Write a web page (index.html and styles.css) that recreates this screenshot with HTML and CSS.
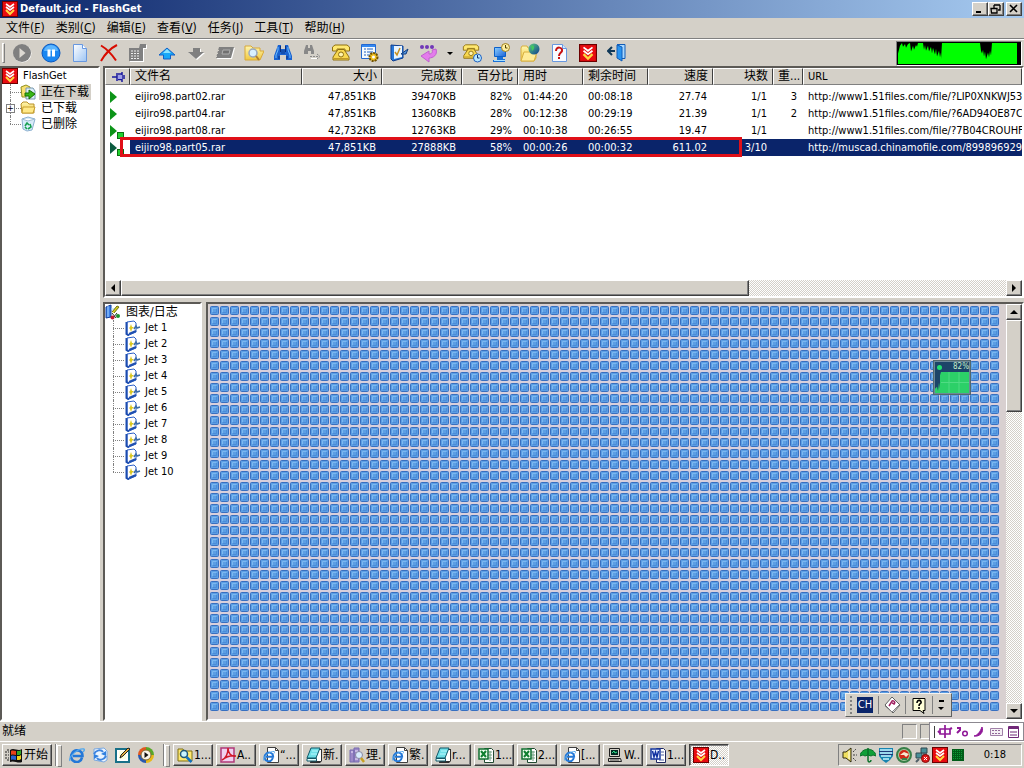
FILE: index.html
```html
<!DOCTYPE html>
<html lang="zh-CN">
<head>
<meta charset="utf-8">
<title>Default.jcd - FlashGet</title>
<link rel="stylesheet" href="styles.css">
</head>
<body>
<svg class="defs" aria-hidden="true">
  <defs>
    <linearGradient id="gBlue" x1="0" y1="0" x2="1" y2="1"><stop offset="0" stop-color="#8ed0ff"/><stop offset="1" stop-color="#1a62d8"/></linearGradient>
    <linearGradient id="gPage" x1="0" y1="0" x2="1" y2="1"><stop offset="0" stop-color="#fff"/><stop offset="1" stop-color="#9cc4f4"/></linearGradient>
    <linearGradient id="gFolder" x1="0" y1="0" x2="0" y2="1"><stop offset="0" stop-color="#fff6b0"/><stop offset="1" stop-color="#f0c840"/></linearGradient>
    <linearGradient id="gGlobe" x1="0" y1="0" x2="1" y2="1"><stop offset="0" stop-color="#60d080"/><stop offset="1" stop-color="#0c3c90"/></linearGradient>
    <pattern id="blocks" width="10" height="11" patternUnits="userSpaceOnUse">
      <rect width="10" height="11" fill="#d8d0dc"/>
      <rect x="0.500" y="0.500" width="8" height="8" rx="1" fill="#5c9fe4" stroke="#386fc0"/>
      <path d="M2.500 6.500v-4h4" fill="none" stroke="#7cb8f0"/>
      <path d="M6.500 3v3.500h-4" fill="none" stroke="#4c8cd8"/>
    </pattern>
  </defs>
  <symbol id="fg" viewBox="0 0 16 16"><path fill="#6c0000" d="M0 0h16v16H0z"/><path fill="#e80c10" d="M1 1h14v14H1z"/><path d="M4 3l4 3 4-3M4 6l4 3 4-3" fill="none" stroke="#fff" stroke-width="1.600"/><path d="M4 9l4 4 4-4" fill="none" stroke="#ffd840" stroke-width="2"/></symbol>
  <symbol id="play" viewBox="0 0 20 20"><circle cx="10.500" cy="10.500" r="9" fill="#fff"/><circle cx="10" cy="10" r="9" fill="#808080"/><path d="M7.500 5v10l6-5z" fill="#ddd9d2"/></symbol>
  <symbol id="pause" viewBox="0 0 20 20"><circle cx="10" cy="10" r="9" fill="#1a86f0" stroke="#0a58c0"/><path d="M3 8a7 6 0 0114 0z" fill="#5cb6ff"/><path d="M6.500 6.500h3v7h-3zM11 6.500h3v7h-3z" fill="#fff"/></symbol>
  <symbol id="page" viewBox="0 0 20 20"><path d="M3.500 1.500h9l4 4v13h-13z" fill="url(#gPage)" stroke="#6898e0"/><path d="M12.500 1.500v4h4" fill="#fff" stroke="#6898e0"/></symbol>
  <symbol id="del" viewBox="0 0 20 20"><path d="M2 2.500c5 3 11 9 15 15M18 2C12 5 6 11 2 18" fill="none" stroke="#d80c00" stroke-width="2"/></symbol>
  <symbol id="props" viewBox="0 0 20 20"><path d="M2 6h10l1-4h6v4h-3v13H2z" fill="#fff"/><path d="M1 5h10l1-4h6v4h-3v13H1z" fill="#808080"/><path d="M3 8h9M3 10.500h9M3 13h9M3 15.500h9" stroke="#eee" stroke-dasharray="2 1"/></symbol>
  <symbol id="up" viewBox="0 0 20 20"><path d="M10 5l8 7h-4.500v4h-7v-4H2z" fill="#18a8f8" stroke="#1060c8"/><path d="M10 6l4 4H6z" fill="#8ce4ff"/></symbol>
  <symbol id="down" viewBox="0 0 20 20"><path d="M11 17l8-7h-4V6H8v4H3z" fill="#fff"/><path d="M10 16l8-7h-4V5H7v4H2z" fill="#808080"/></symbol>
  <symbol id="stack" viewBox="0 0 20 20"><path d="M5 5h15l-3 11H2z" fill="#fff"/><path d="M4 4h15l-3 11H1z" fill="#808080"/><path d="M8 7h7l-1 4H7z" stroke="#b0b0b0" fill="#707070"/><path d="M0 7.500h4M0 10.500h3M0 13.500h2" stroke="#d4d0c8"/></symbol>
  <symbol id="fsearch" viewBox="0 0 20 20"><path d="M1 3h6l2 2h7v3h4l-4 9H1z" fill="url(#gFolder)" stroke="#d8a838"/><circle cx="9" cy="10" r="4" fill="#d8f0ff" stroke="#98a8c0" stroke-width="1.500"/><path d="M12 13l3 4" stroke="#b08030" stroke-width="2"/></symbol>
  <symbol id="bino" viewBox="0 0 20 20"><path d="M5 2h3v4h4V2h3l4 11v4h-6v-5H7v5H1v-4z" fill="#1a62d0"/><path d="M5 4v3L3 12v3M15 4v3l2 5v3" stroke="#70c0ff" fill="none"/><path d="M7.500 3v6M12.500 3v6M6 13v3M14 13v3" stroke="#083080"/><path d="M8 7h4v4H8z" fill="#1450b0"/></symbol>
  <symbol id="binog" viewBox="0 0 20 20"><path d="M4 2h2v3h2V2h2l2 6v3H9V8H6v3H2V8z" fill="#888"/><path d="M8 13.500h9M15 11l3 2.500-3 2.500" stroke="#888" fill="none" stroke-dasharray="2 1"/><path d="M9 15.500h6" stroke="#fff"/></symbol>
  <symbol id="phone" viewBox="0 0 20 20"><path d="M1.500 4L4 2h12l2.500 2v4H14V6H6v2H1.500z" fill="#ffe870" stroke="#907010"/><path d="M7 6.500h6l5 7.500v3H2v-3z" fill="#f8d850" stroke="#907010"/><circle cx="10" cy="11.500" r="2.500" fill="#fff4b0" stroke="#907010"/><path d="M3 15.500h14" stroke="#c09828"/></symbol>
  <symbol id="opts" viewBox="0 0 20 20"><path d="M1.500 1.500h14v14h-14z" fill="#f4faff" stroke="#2468d0"/><path d="M2 2h13v2H2z" fill="#3488f0"/><path d="M4 6h2M7 6h6M4 9h2M7 9h6M4 12h2M7 12h4" stroke="#2060c0"/><circle cx="13.500" cy="14" r="4" fill="#f0c020" stroke="#705000" stroke-width="2" stroke-dasharray="2 1"/><circle cx="13.500" cy="14" r="1.500" fill="#fff"/></symbol>
  <symbol id="log" viewBox="0 0 20 20"><path d="M2 2l12 1v12l-10 3-2-2z" fill="#2878d8" stroke="#0c3c90"/><path d="M5 3h8v11l-8 2z" fill="#e8f4ff"/><path d="M6 9l2 3 3-7" stroke="#c89020" stroke-width="1.500" fill="none"/><path d="M12 11l7-5-2 5h-4z" fill="#5898e0" stroke="#103c80"/></symbol>
  <symbol id="purple" viewBox="0 0 20 20"><circle cx="4" cy="4" r="2" fill="#7038b8"/><circle cx="9" cy="4" r="2" fill="#7038b8"/><circle cx="14" cy="4" r="2" fill="#7038b8"/><path d="M14 7l4-1c2 6-3 9-7 9v4l-8-6 8-5v3c3 0 4-2 3-4z" fill="#e47cec" stroke="#c060d0"/></symbol>
  <symbol id="phonec" viewBox="0 0 20 20"><use href="#phone" width="18" height="18"/><circle cx="15.500" cy="15" r="4" fill="#b8e8ff" stroke="#2060c0"/><path d="M15.500 12v3h2" stroke="#103070" fill="none"/></symbol>
  <symbol id="pc" viewBox="0 0 20 20"><path d="M3.500 4.500h11v9h-11z" fill="url(#gBlue)" stroke="#0c60c8"/><path d="M6 14h6v2h2v3H2v-2h4z" fill="#1870d8"/><path d="M3 17.500h11" stroke="#a8e0ff"/><circle cx="14.500" cy="4.500" r="4" fill="#fff0a0" stroke="#a08020"/><path d="M14.500 2v3h2" stroke="#504000" fill="none"/></symbol>
  <symbol id="fglobe" viewBox="0 0 20 20"><path d="M1 5l1-2h5l1 2h8v10l-2 3H1z" fill="url(#gFolder)" stroke="#d8b040"/><path d="M4 9h13l-3 9H1z" fill="#ffec98" stroke="#d8b040"/><circle cx="14" cy="6" r="5.500" fill="url(#gGlobe)"/><path d="M11 3c4-2 4 3 1 5" fill="#40c860"/></symbol>
  <symbol id="help" viewBox="0 0 20 20"><path d="M3.500 1.500h10l4 4v13h-14z" fill="#f8fbff" stroke="#6898e0"/><path d="M13.500 1.500v4h4" fill="#d4e6fc" stroke="#6898e0"/><path d="M7 8c0-5 7-4 6 0-1 2-3 2-3 5M10 14v2" fill="none" stroke="#c81010" stroke-width="2"/></symbol>
  <symbol id="exit" viewBox="0 0 20 20"><path d="M10 1.500h8v14h-4V4z" fill="#a8d8ff" stroke="#105cb8"/><path d="M10 2l5 2v14l-5-3z" fill="#2894f0" stroke="#105cb8"/><path d="M1 8h7M5 4L1 8l4 4" stroke="#103858" stroke-width="2" fill="none"/></symbol>
  <symbol id="folder" viewBox="0 0 16 16"><path d="M1 4l2-2h4l2 2h5v9H2z" fill="url(#gFolder)" stroke="#b89028"/><path d="M3 7h12l-2 6H2z" fill="#ffe988" stroke="#c8a030"/></symbol>
  <symbol id="fdown" viewBox="0 0 16 16"><path d="M1 3l5-2 4 2v3l-2 7H2z" fill="#f8e070" stroke="#90901c"/><path d="M6 4h7l2 3v8H6z" fill="#dceefa" stroke="#7898b0"/><path d="M5 9h4V6l6 4-6 5v-3H5z" fill="#38b818" stroke="#187000"/></symbol>
  <symbol id="recycle" viewBox="0 0 16 16"><path d="M2 3l6-2 7 2-3 11-5 1-4-2z" fill="#d8ecfa" stroke="#8cb0d0"/><path d="M2 3l6 2 7-2" fill="#fff" stroke="#a0bcd4"/><path d="M5 10l2-3 2 2M10 8l1 3-3 2M5 11l2 2" stroke="#18a050" stroke-width="1.600" fill="none"/></symbol>
  <symbol id="jet" viewBox="0 0 16 16"><path d="M2 2l7-1 2 2v9l-7 3-2-1z" fill="#fff" stroke="#2c60c8"/><path d="M1.500 2v12l2.500 1.500" fill="none" stroke="#1c4cb0" stroke-width="2"/><path d="M4 14l7-3" stroke="#2050b0" stroke-width="2"/><path d="M6 4l1 3h2L7 9l-1 3-1-3-1-1 1-1z" fill="#dcc820"/><path d="M9 9l2-3 1 2 3-1" stroke="#3c6ca8" stroke-width="1.600" fill="none"/></symbol>
  <symbol id="chart" viewBox="0 0 16 16"><path d="M1 3l5-2v12l-5 1z" fill="#3c80e8" stroke="#103c98"/><path d="M3 2v11M6 5h4" stroke="#a8d8ff"/><path d="M7 8l5-6 2 1-5 6" fill="#d8d020" stroke="#707010"/><path d="M7 9l4 5M12 9l-4 5" stroke="#303030"/><circle cx="7.500" cy="13.500" r="2" fill="#c01830"/><circle cx="13" cy="12" r="2" fill="#18902c"/></symbol>
  <symbol id="pin" viewBox="0 0 14 12"><path d="M0 6h5M5 2v8M6 3h4M6 8.500h4M10 1v10M12 4v4" stroke="#1818a0" stroke-width="1.500" fill="none"/><path d="M6 4h4v4H6z" fill="#a0a0e8"/></symbol>
  <symbol id="ie" viewBox="0 0 16 16"><path d="M13 10.500A5.500 5.500 0 113.200 6.200 5.500 5.500 0 0113.500 9H4" fill="none" stroke="#2478d8" stroke-width="2.600"/><path d="M1 14C-1 10 9 1 15 2c1 1 0 2-1 3" fill="none" stroke="#50a8f0" stroke-width="1.300"/></symbol>
  <symbol id="iepage" viewBox="0 0 16 16"><path d="M4.500.500h8l3 3v12h-11z" fill="#fff" stroke="#404040"/><path d="M12.500.500v3h3" fill="none" stroke="#404040"/><use href="#ie" y="3" width="12" height="12"/></symbol>
  <symbol id="oe" viewBox="0 0 16 16"><path d="M2 2l10-1 3 3v9l-3 2-10-2z" fill="#eaf4ff" stroke="#7aa8e0"/><path d="M2 7c2-4 7-5 9-2M14 9c-2 4-7 5-9 2" fill="none" stroke="#3c84e0" stroke-width="2"/><path d="M9 7l5-3v5zM7 9l-5 3V7z" fill="#3080e0"/></symbol>
  <symbol id="desk" viewBox="0 0 16 16"><path d="M1 2h13v13H1z" fill="#fff" stroke="#187088" stroke-width="2"/><path d="M4 4h7v8H4z" fill="#ffffe0"/><path d="M5 11l1-3 7-7 2 1-7 7z" fill="#e8b040" stroke="#202020"/></symbol>
  <symbol id="wmp" viewBox="0 0 16 16"><path d="M8 0a8 8 0 018 8H8z" fill="#58a828"/><path d="M16 8a8 8 0 01-8 8V8z" fill="#e8b818"/><path d="M8 16a8 8 0 01-8-8h8z" fill="#2858b0"/><path d="M0 8a8 8 0 018-8v8z" fill="#e05820"/><circle cx="8" cy="8" r="5" fill="#f8f4e8" stroke="#806830"/><path d="M6.500 5v6l4-3z" fill="#101010"/></symbol>
  <symbol id="find" viewBox="0 0 16 16"><path d="M1 2h5l1 2h8v10H1z" fill="#ffe870" stroke="#807010"/><circle cx="7" cy="7" r="3.500" fill="#c8f4ff" stroke="#205878" stroke-width="1.500"/><path d="M9.500 10l5 5" stroke="#1070c0" stroke-width="2.500"/></symbol>
  <symbol id="acro" viewBox="0 0 16 16"><path d="M1 1h13v14H1z" fill="#f0d0f0" stroke="#b03878" stroke-width="1.500"/><path d="M2 13c4-2 6-7 6-12 0 5 3 9 8 8-5-1-10 1-14 4z" fill="none" stroke="#d01828" stroke-width="1.500"/></symbol>
  <symbol id="note" viewBox="0 0 16 16"><path d="M6 2h10v12l-2 2H4z" fill="#303030"/><path d="M11 3h4v11h-5z" fill="#fff"/><path d="M5 1h9l-4 10H1z" fill="#70e0e8" stroke="#105868"/><path d="M1 11.500h9.500v2.500H1z" fill="#e8ffff" stroke="#105868"/><path d="M6 4h6M5 7h6" stroke="#b8f8ff"/></symbol>
  <symbol id="books" viewBox="0 0 16 16"><path d="M1 3h4v12H1zM5 1h5v14H5z" fill="#9c88c8" stroke="#786cb0"/><path d="M2 5h2M6 4h3M6 12h3" stroke="#f0e8ff"/><circle cx="10" cy="8" r="3.500" fill="#d8ecff" stroke="#8888a0"/><path d="M12 11l3 4" stroke="#c8a020" stroke-width="2.500"/></symbol>
  <symbol id="xls" viewBox="0 0 16 16"><path d="M6.500 1.500h7l2 2v12h-9z" fill="#fff" stroke="#204830"/><path d="M9 5h5M9 8h5M9 11h5M12 4v10" stroke="#70a080"/><path d="M1 2h9v10H1z" fill="#f0fff0" stroke="#107030" stroke-width="1.500"/><path d="M3 4l5 6M8 4l-5 6" stroke="#108030" stroke-width="2"/></symbol>
  <symbol id="doc" viewBox="0 0 16 16"><path d="M6.500 1.500h7l2 2v12h-9z" fill="#fff" stroke="#202860"/><path d="M11 5h3M11 8h3M9 13h5" stroke="#5060a0"/><path d="M1 2h9v10H1z" fill="#e8f0ff" stroke="#1838a0" stroke-width="1.500"/><path d="M2.500 4l1.500 6 1.500-5L7 10l1.500-6" fill="none" stroke="#1030a0" stroke-width="1.500"/></symbol>
  <symbol id="term" viewBox="0 0 16 16"><path d="M2.500 1.500h10v8h-10z" fill="#d4d0c8" stroke="#202020"/><path d="M1.500 11.500h12l1 3h-13z" fill="#d4d0c8" stroke="#202020"/><path d="M4 3h7v5H4z" fill="#002820"/><path d="M5 6l2-2 1 2 2-1" stroke="#30e890" fill="none"/><path d="M3 13h9" stroke="#505050"/></symbol>
  <symbol id="win" viewBox="0 0 18 16"><path d="M0 5h4M0 8h4M0 11h4M2 3h3M2 13h3" stroke="#202020" stroke-dasharray="2 1"/><path d="M5 3c4-3 8 2 12-1v13c-4 2-8-2-12 0z" fill="#101010"/><path d="M6 4c2-1 3 0 5 0v4C9 8 8 7 6 8z" fill="#e84018"/><path d="M12 4c2 0 3 0 4-1v4c-1 1-2 1-4 1z" fill="#30a828"/><path d="M6 9c2-1 3 0 5 0v4c-2 0-3-1-5 0z" fill="#2860d0"/><path d="M12 9c2 0 3 0 4-1v4c-1 1-2 1-4 1z" fill="#f0d020"/></symbol>
  <symbol id="sound" viewBox="0 0 16 16"><path d="M1 5h3l5-4v14l-5-4H1z" fill="#f0e060" stroke="#302c10"/><path d="M7 4v8" stroke="#fff"/><path d="M11 5l3-3M11 8h4M11 11l3 3" stroke="#404040" stroke-dasharray="2 1"/></symbol>
  <symbol id="umb" viewBox="0 0 16 16"><path d="M0 9c1-9 15-9 16 0l-3-1-2 1-3-1-3 1-2-1z" fill="#10a038" stroke="#0a7028"/><path d="M8 1v12c0 3 3 2 3 0" fill="none" stroke="#087028" stroke-width="1.500"/></symbol>
  <symbol id="shield" viewBox="0 0 16 16"><path d="M1 1h14v8l-3 4-4 3-4-3-3-4z" fill="#1884b0"/><path d="M2 3h12M2 6h12M3 9h10M5 12h6" stroke="#c8f4ff" stroke-width="1.300"/><path d="M1 4.500h14M1 7.500h14" stroke="#203878"/></symbol>
  <symbol id="circ" viewBox="0 0 16 16"><circle cx="8" cy="8" r="7" fill="#a8c8a0" stroke="#388048" stroke-width="2"/><circle cx="8" cy="8" r="5" fill="#d02818"/><path d="M4 8l4-3 5 2-3 3-2-2z" fill="#f8e8d0"/><path d="M6 12h5" stroke="#388048" stroke-width="2"/></symbol>
  <symbol id="netx" viewBox="0 0 16 16"><path d="M7 1h6v5H7zM2 6h6v5H2z" fill="#489098" stroke="#304850"/><path d="M5 12l-3 3M9 7h4" stroke="#506068" stroke-width="2"/><circle cx="11.500" cy="11.500" r="4" fill="#e01818" stroke="#800c0c"/><path d="M10 10l3 3M13 10l-3 3" stroke="#fff"/></symbol>
  <symbol id="ggrid" viewBox="0 0 16 16"><path d="M2 2h12v12H2z" fill="#005c18"/><path d="M3 3.500h10M3 5.500h10M3 7.500h10M3 9.500h10M3 11.500h10" stroke="#109838" stroke-dasharray="1 1"/></symbol>
</svg>

<header class="titlebar">
  <svg class="i16"><use href="#fg"/></svg>
  <h1>Default.jcd - FlashGet</h1>
  <div class="winbtns">
    <button class="raised" aria-label="最小化"><svg viewBox="0 0 12 10"><path d="M2 8h5" stroke="#000" stroke-width="2"/></svg></button>
    <button class="raised" aria-label="还原"><svg viewBox="0 0 12 10"><path d="M4 1h6M4 1v3M10 1v5H8M1 4.500h6v4.500H1.500z" fill="none" stroke="#000" stroke-width="1.300"/></svg></button>
    <button class="raised close" aria-label="关闭"><svg viewBox="0 0 12 10"><path d="M2 1l7 7M9 1L2 8" stroke="#000" stroke-width="1.600"/></svg></button>
  </div>
</header>

<nav class="menubar">
  <button>文件(<u>F</u>)</button><button>类别(<u>C</u>)</button><button>编辑(<u>E</u>)</button><button>查看(<u>V</u>)</button><button>任务(<u>J</u>)</button><button>工具(<u>T</u>)</button><button>帮助(<u>H</u>)</button>
</nav>

<div class="toolbar">
  <span class="grip"></span>
  <button aria-label="开始"><svg><use href="#play"/></svg></button>
  <button aria-label="暂停"><svg><use href="#pause"/></svg></button>
  <button aria-label="新建"><svg><use href="#page"/></svg></button>
  <button aria-label="删除"><svg><use href="#del"/></svg></button>
  <button aria-label="属性"><svg><use href="#props"/></svg></button>
  <button aria-label="上移"><svg><use href="#up"/></svg></button>
  <button aria-label="下移"><svg><use href="#down"/></svg></button>
  <button aria-label="打开"><svg><use href="#stack"/></svg></button>
  <button aria-label="打开目录"><svg><use href="#fsearch"/></svg></button>
  <button aria-label="查找"><svg><use href="#bino"/></svg></button>
  <button aria-label="查找下一个"><svg><use href="#binog"/></svg></button>
  <button aria-label="拨号"><svg><use href="#phone"/></svg></button>
  <button aria-label="选项"><svg><use href="#opts"/></svg></button>
  <button aria-label="日志"><svg><use href="#log"/></svg></button>
  <button aria-label="速度"><svg><use href="#purple"/></svg></button>
  <button class="drop" aria-label="更多"><span class="tri down"></span></button>
  <button aria-label="计划拨号"><svg><use href="#phonec"/></svg></button>
  <button aria-label="完成后关机"><svg><use href="#pc"/></svg></button>
  <button aria-label="站点"><svg><use href="#fglobe"/></svg></button>
  <button aria-label="帮助"><svg><use href="#help"/></svg></button>
  <button class="home" aria-label="主页"><svg><use href="#fg"/></svg></button>
  <button aria-label="退出"><svg><use href="#exit"/></svg></button>
  <svg class="graph" viewBox="0 0 124 24" preserveAspectRatio="none">
    <path fill="#000" d="M0 0h124v24H0z"/>
    <path fill="#0f0" d="M1 23V12L3 4 5 1 6 5 8 2 9 6 11 2 13 1 14 10 16 4 17 8 19 3 20 5 21 1H26L27 8 28 3 29 9 31 4 32 10 34 5 35 12 36 6 38 13 39 7 40 15 42 9 43 16 44 11V18L45 1H83L84 9 85 12 86 8 87 15 88 10 89 18 91 11 92 16 93 9 94 14 95 1H120V23z"/>
  </svg>
</div>

<main class="workspace">
  <aside class="sunken tree">
    <ul>
      <li class="root"><svg class="i16"><use href="#fg"/></svg><span>FlashGet</span></li>
      <li class="kid"><svg class="i16"><use href="#fdown"/></svg><span class="cjk selected">正在下载</span></li>
      <li class="kid has"><button class="expander" aria-label="展开">+</button><svg class="i16"><use href="#folder"/></svg><span class="cjk">已下载</span></li>
      <li class="kid last"><svg class="i16"><use href="#recycle"/></svg><span class="cjk">已删除</span></li>
    </ul>
  </aside>

  <div class="right">
    <section class="sunken list">
      <div class="tablewrap">
        <table>
          <colgroup><col class="c-pin"><col class="c-name"><col class="c-size"><col class="c-size"><col class="c-pct"><col class="c-time"><col class="c-time"><col class="c-time"><col class="c-blk"><col class="c-try"><col></colgroup>
          <thead><tr><th><svg class="pin"><use href="#pin"/></svg></th><th>文件名</th><th class="r">大小</th><th class="r">完成数</th><th class="r">百分比</th><th>用时</th><th>剩余时间</th><th class="r">速度</th><th class="r">块数</th><th class="cut">重...</th><th class="lat">URL</th></tr></thead>
          <tbody>
            <tr><td class="st"><span class="go"></span></td><td>eijiro98.part02.rar</td><td class="r">47,851KB</td><td class="r">39470KB</td><td class="r">82%</td><td>01:44:20</td><td>00:08:18</td><td class="r">27.74</td><td class="r">1/1</td><td class="r">3</td><td>http://www1.51files.com/file/?LIP0XNKWJ53</td></tr>
            <tr><td class="st"><span class="go"></span></td><td>eijiro98.part04.rar</td><td class="r">47,851KB</td><td class="r">13608KB</td><td class="r">28%</td><td>00:12:38</td><td>00:29:19</td><td class="r">21.39</td><td class="r">1/1</td><td class="r">2</td><td>http://www1.51files.com/file/?6AD94OE87C0</td></tr>
            <tr><td class="st"><span class="go dot"></span></td><td>eijiro98.part08.rar</td><td class="r">42,732KB</td><td class="r">12763KB</td><td class="r">29%</td><td>00:10:38</td><td>00:26:55</td><td class="r">19.47</td><td class="r">1/1</td><td></td><td>http://www1.51files.com/file/?7B04CROUHF</td></tr>
            <tr class="sel"><td class="st"><span class="go dot dim"></span></td><td>eijiro98.part05.rar</td><td class="r">47,851KB</td><td class="r">27888KB</td><td class="r">58%</td><td>00:00:26</td><td>00:00:32</td><td class="r">611.02</td><td class="r">3/10</td><td></td><td>http://muscad.chinamofile.com/8998969293</td></tr>
          </tbody>
        </table>
        <div class="mark"></div>
      </div>
      <div class="hscroll">
        <button class="raised sb" aria-label="向左"><span class="tri left"></span></button>
        <div class="track"><div class="raised thumb"></div></div>
        <button class="raised sb" aria-label="向右"><span class="tri right"></span></button>
      </div>
    </section>

    <section class="bottom">
      <div class="sunken tree jets">
        <ul>
          <li class="root"><svg class="i16"><use href="#chart"/></svg><span class="cjk">图表/日志</span></li>
          <li class="kid"><svg class="i16"><use href="#jet"/></svg><span>Jet 1</span></li>
          <li class="kid"><svg class="i16"><use href="#jet"/></svg><span>Jet 2</span></li>
          <li class="kid"><svg class="i16"><use href="#jet"/></svg><span>Jet 3</span></li>
          <li class="kid"><svg class="i16"><use href="#jet"/></svg><span>Jet 4</span></li>
          <li class="kid"><svg class="i16"><use href="#jet"/></svg><span>Jet 5</span></li>
          <li class="kid"><svg class="i16"><use href="#jet"/></svg><span>Jet 6</span></li>
          <li class="kid"><svg class="i16"><use href="#jet"/></svg><span>Jet 7</span></li>
          <li class="kid"><svg class="i16"><use href="#jet"/></svg><span>Jet 8</span></li>
          <li class="kid"><svg class="i16"><use href="#jet"/></svg><span>Jet 9</span></li>
          <li class="kid last"><svg class="i16"><use href="#jet"/></svg><span>Jet 10</span></li>
        </ul>
      </div>
      <div class="sunken blocks">
        <div class="field"><svg><rect width="100%" height="100%" fill="url(#blocks)"/></svg></div>
        <div class="vscroll">
          <button class="raised sb" aria-label="向上"><span class="tri up"></span></button>
          <div class="track"><div class="raised thumb"></div></div>
          <button class="raised sb" aria-label="向下"><span class="tri down"></span></button>
        </div>
        <div class="dropwin">
          <div class="drophead"><span class="led"></span><span class="pct">82%</span></div>
          <svg viewBox="0 0 34 20" preserveAspectRatio="none"><path fill="#1c4468" d="M0 0h34v20H0z"/><path fill="#2cd068" d="M0 20v-4l2-2 1 4 1-8 1 6V3l1-3h28v20z"/><path d="M6 10h28M14 0v20M24 0v20" stroke="#60e090" stroke-opacity=".7"/></svg>
        </div>
        <div class="langbar">
          <span class="dots"></span>
          <button><b class="ch">CH</b></button>
          <button aria-label="手写"><svg viewBox="0 0 18 18"><path d="M9 1l8 8-7 8-8-8z" fill="#fff" stroke="#606060"/><path d="M2 10l7 6 7-7" stroke="#888" fill="none"/><path d="M6 10l3-5c3-1 4 3 1 3M9 7l3 1" fill="none" stroke="#a02060" stroke-width="1.500"/></svg></button>
          <button aria-label="语言帮助"><svg viewBox="0 0 18 18"><path d="M3 2.500h12v12h-2l1 3-4-3H3z" fill="#ffffd8" stroke="#000"/><path d="M7 7c0-4 5-3 4 0-1 1-2 1-2 3M9 11v2" stroke="#000" stroke-width="1.600" fill="none"/></svg></button>
          <button class="mini" aria-label="最小化语言栏"><i></i><span class="tri down"></span></button>
        </div>
      </div>
    </section>
  </div>
</main>

<div class="statusbar">
  <span class="cjk msg">就绪</span>
  <span class="cell"></span><span class="cell"></span>
  <div class="ime">
    <span class="bar"></span>
    <svg viewBox="0 0 16 14"><path d="M3 4h10v5H3zM8 0v13" fill="none" stroke="#901898" stroke-width="1.700"/><path d="M1 6l2 2M13 4l2-1" stroke="#901898" stroke-width="2"/></svg>
    <svg viewBox="0 0 16 14"><path d="M3 3h3v2L3 8" fill="none" stroke="#901898" stroke-width="2"/><circle cx="11" cy="8.500" r="2.300" fill="none" stroke="#901898" stroke-width="1.500"/></svg>
    <svg viewBox="0 0 16 14"><path d="M11 2c2 5-2 10-8 9 4-1 6-4 8-9z" fill="#901898" stroke="#901898"/></svg>
    <svg viewBox="0 0 16 14"><path d="M2.500 3.500h12v7h-12z" fill="#f4f0f4" stroke="#a080a8"/><path d="M4 5.500h9M4 8.500h9" stroke="#906898" stroke-dasharray="2 1"/></svg>
    <svg viewBox="0 0 16 14"><path d="M3.500 1.500h10v11h-10z" fill="#fff" stroke="#702878"/><path d="M3 3h11" stroke="#702878" stroke-width="2"/><path d="M5 7h7M5 10h7" stroke="#702878"/></svg>
  </div>
</div>

<footer class="taskbar">
  <button class="raised start"><svg><use href="#win"/></svg><span>开始</span></button>
  <span class="sep"></span>
  <div class="quick">
    <button aria-label="Internet Explorer"><svg class="i16"><use href="#ie"/></svg></button>
    <button aria-label="Outlook Express"><svg class="i16"><use href="#oe"/></svg></button>
    <button aria-label="显示桌面"><svg class="i16"><use href="#desk"/></svg></button>
    <button aria-label="媒体播放器"><svg class="i16"><use href="#wmp"/></svg></button>
  </div>
  <span class="sep"></span>
  <div class="tasks">
    <button class="raised"><svg class="i16"><use href="#find"/></svg><span>1...</span></button>
    <button class="raised"><svg class="i16"><use href="#acro"/></svg><span>A..</span></button>
    <button class="raised"><svg class="i16"><use href="#iepage"/></svg><span>“...</span></button>
    <button class="raised"><svg class="i16"><use href="#note"/></svg><span>新.</span></button>
    <button class="raised"><svg class="i16"><use href="#books"/></svg><span>理.</span></button>
    <button class="raised"><svg class="i16"><use href="#iepage"/></svg><span>繁.</span></button>
    <button class="raised"><svg class="i16"><use href="#note"/></svg><span>r...</span></button>
    <button class="raised"><svg class="i16"><use href="#xls"/></svg><span>1...</span></button>
    <button class="raised"><svg class="i16"><use href="#xls"/></svg><span>2...</span></button>
    <button class="raised"><svg class="i16"><use href="#iepage"/></svg><span>[...</span></button>
    <button class="raised"><svg class="i16"><use href="#term"/></svg><span>W..</span></button>
    <button class="raised"><svg class="i16"><use href="#doc"/></svg><span>1...</span></button>
    <button class="raised active"><svg class="i16"><use href="#fg"/></svg><span>D..</span></button>
  </div>
  <div class="tray">
    <svg class="i16"><use href="#sound"/></svg><svg class="i16"><use href="#umb"/></svg><svg class="i16"><use href="#shield"/></svg><svg class="i16"><use href="#circ"/></svg><svg class="i16"><use href="#netx"/></svg><svg class="i16"><use href="#fg"/></svg><svg class="i16"><use href="#ggrid"/></svg>
    <time>0:18</time>
  </div>
</footer>
</body>
</html>
```

FILE: styles.css
```css
:root {
  --face: #d4d0c8;
  --shadow: #808080;
  --dark: #404040;
  --navy: #0a246a;
}

* { box-sizing: border-box; }

body {
  margin: 0;
  height: 100vh;
  display: flex;
  flex-direction: column;
  overflow: hidden;
  background: var(--face);
  color: #000;
  font: 11px/16px "DejaVu Sans Condensed", "Liberation Sans", "Noto Sans CJK SC", sans-serif;
}

button {
  margin: 0;
  padding: 0;
  border: 0;
  background: none;
  color: inherit;
  font: inherit;
}

svg { display: block; flex: none; }
.defs { position: absolute; width: 0; height: 0; }
.i16 { width: 16px; height: 16px; }
.cjk { font-size: 12px; }

.raised {
  background: var(--face);
  border: 1px solid;
  border-color: #fff var(--dark) var(--dark) #fff;
  box-shadow: inset -1px -1px var(--shadow);
}

.sunken {
  border: 2px solid;
  border-color: #5c5a56 #fff #fff #5c5a56;
}

.tri { display: block; width: 0; height: 0; border: 4px solid transparent; }
.tri.down { border-top-color: #000; border-bottom: 0; }
.tri.up { border-bottom-color: #000; border-top: 0; }
.tri.left { border-right-color: #000; border-left: 0; }
.tri.right { border-left-color: #000; border-right: 0; }

/* Title bar */
.titlebar {
  flex: none;
  height: 18px;
  display: flex;
  align-items: center;
  gap: 2px;
  padding: 0 2px;
  background: linear-gradient(to right, var(--navy), #a6caf0);
  color: #fff;
}
.titlebar h1 {
  flex: 1;
  margin: 0;
  font: bold 11px/16px "DejaVu Sans Condensed", sans-serif;
}
.winbtns { display: flex; }
.winbtns button {
  width: 16px;
  height: 14px;
  display: grid;
  place-items: center;
}
.winbtns svg { width: 12px; height: 10px; }
.winbtns .close { margin-left: 2px; }

/* Menu */
.menubar {
  flex: none;
  height: 20px;
  display: flex;
  align-items: center;
  gap: 11px;
  padding: 0 6px;
  font-size: 12px;
}

/* Toolbar */
.toolbar {
  flex: none;
  height: 28px;
  display: flex;
  align-items: center;
  border-top: 1px solid var(--shadow);
  box-shadow: inset 0 1px #fff;
  padding: 1px 2px 0;
}
.toolbar button {
  width: 29px;
  height: 24px;
  display: grid;
  place-items: center;
}
.toolbar button svg { width: 20px; height: 20px; }
.toolbar .home svg { width: 18px; height: 18px; }
.toolbar .drop { width: 15px; }
.toolbar .drop .tri { border-width: 3px 3px 0; }
.grip {
  width: 3px;
  height: 20px;
  margin-right: 2px;
  border: 1px solid;
  border-color: #fff var(--shadow) var(--shadow) #fff;
}
.graph {
  width: 126px;
  height: 25px;
  margin-left: auto;
  border: 1px solid;
  border-color: var(--shadow) #fff #fff var(--shadow);
}

/* Work area */
.workspace {
  flex: 1;
  min-height: 0;
  display: grid;
  grid-template-columns: 100px minmax(0, 1fr);
  gap: 3px;
}
.right {
  min-height: 0;
  display: grid;
  grid-template-rows: 232px minmax(0, 1fr);
  gap: 4px;
}
.bottom {
  min-height: 0;
  display: grid;
  grid-template-columns: 99px minmax(0, 1fr);
  gap: 4px;
}

/* Trees */
.tree { background: #fff; overflow: hidden; }
.tree ul { margin: 0; padding: 0; list-style: none; }
.tree li {
  height: 16px;
  display: flex;
  align-items: center;
  gap: 3px;
  white-space: nowrap;
}
.tree .kid {
  position: relative;
  padding-left: 18px;
}
.tree .kid::before {
  content: "";
  position: absolute;
  left: 8px;
  top: 0;
  height: 16px;
  border-left: 1px dotted var(--shadow);
}
.tree .kid::after {
  content: "";
  position: absolute;
  left: 8px;
  top: 8px;
  width: 11px;
  border-top: 1px dotted var(--shadow);
}
.tree .last::before { height: 8px; }
.tree span { padding: 0 2px; }
.tree .selected { background: var(--face); }
.expander {
  position: absolute;
  left: 4px;
  top: 4px;
  z-index: 1;
  width: 9px;
  height: 9px;
  border: 1px solid var(--shadow);
  background: #fff;
  font-size: 9px;
  line-height: 7px;
}
.jets .kid { padding-left: 20px; gap: 2px; }

/* Download list */
.list {
  min-width: 0;
  display: flex;
  flex-direction: column;
  background: #fff;
}
.tablewrap {
  position: relative;
  flex: 1;
  min-height: 0;
  overflow: hidden;
}
table {
  width: 100%;
  table-layout: fixed;
  border-collapse: separate;
  border-spacing: 0;
}
.c-pin { width: 25px; }
.c-name { width: 172px; }
.c-size { width: 80px; }
.c-pct { width: 56px; }
.c-time { width: 65px; }
.c-blk { width: 60px; }
.c-try { width: 30px; }
th, td {
  height: 17px;
  padding: 0 6px 0 5px;
  overflow: hidden;
  white-space: nowrap;
  text-align: left;
  font-weight: normal;
  line-height: 15px;
}
th {
  background: var(--face);
  border: 1px solid;
  border-color: #fff var(--dark) var(--shadow) #fff;
  padding: 0 4px;
  font-size: 12px;
}
td:last-child, th:last-child { padding-right: 0; }
th.lat { font-size: 11px; }
th.cut { padding-right: 0; }
.r { text-align: right; }
.pin { width: 14px; height: 12px; margin-left: 2px; }
tbody::before { content: ""; display: block; height: 3px; }
.sel td { background: var(--navy); color: #fff; }
.sel td.st { background: #fff; }
td.st { overflow: visible; }
.go {
  position: relative;
  display: block;
  width: 0;
  border: 6px solid transparent;
  border-left: 7px solid #0c9418;
  border-right: 0;
}
.dim { border-left-color: #0c5c40; }
.dot::after {
  content: "";
  position: absolute;
  left: 0;
  top: 1px;
  width: 5px;
  height: 5px;
  background: #20d030;
  border: 1px solid #087010;
}
.mark {
  position: absolute;
  left: 15px;
  top: 69px;
  width: 622px;
  height: 20px;
  border: 3px solid #e01018;
}

/* Scroll bars */
.track {
  flex: 1;
  background: repeating-conic-gradient(#fff 0 25%, var(--face) 0 50%) 0 0 / 2px 2px;
}
.sb {
  width: 16px;
  height: 16px;
  display: grid;
  place-items: center;
}
.hscroll { flex: none; display: flex; height: 16px; }
.hscroll .thumb { width: 71%; height: 16px; }
.vscroll { display: flex; flex-direction: column; width: 16px; }
.vscroll .thumb { width: 16px; height: 24%; }

/* Block map */
.blocks {
  position: relative;
  min-width: 0;
  min-height: 0;
  display: flex;
  background: #d8d0d0;
}
.field {
  flex: 1;
  min-width: 0;
  padding: 2px 6px 8px 2px;
}
.field svg { width: 100%; height: 100%; }

.dropwin {
  position: absolute;
  right: 51px;
  top: 56px;
  width: 38px;
  height: 35px;
  padding: 1px;
  border: 1px solid #54686c;
  background: #6c8898;
}
.drophead {
  display: flex;
  justify-content: space-between;
  align-items: center;
  height: 10px;
  background: #1c4468;
}
.led { width: 5px; height: 5px; margin-left: 2px; border-radius: 50%; background: #20e070; }
.pct { color: #c8f0c8; font-size: 8px; line-height: 10px; }
.dropwin svg { width: 34px; height: 21px; }

.langbar {
  position: absolute;
  right: 70px;
  bottom: 2px;
  display: flex;
  align-items: stretch;
  height: 24px;
  padding: 2px;
  border: 1px solid;
  border-color: #f4f2ee #606060 #606060 #f4f2ee;
  background: var(--face);
}
.dots { width: 4px; border-right: 2px dotted var(--shadow); }
.langbar button {
  width: 27px;
  display: grid;
  place-items: center;
  border-right: 1px solid var(--shadow);
}
.langbar .mini { width: 16px; border-right: 0; align-content: center; gap: 5px; }
.mini i { width: 5px; height: 2px; background: #000; }
.mini .tri { border-width: 3px 3px 0; }
.langbar svg { width: 18px; height: 18px; }
.ch {
  width: 16px;
  background: var(--navy);
  color: #fff;
  font-weight: normal;
  text-align: center;
}

/* Status bar */
.statusbar {
  flex: none;
  height: 20px;
  display: flex;
  gap: 3px;
  padding-left: 2px;
  border-top: 1px solid #fff;
}
.msg { flex: 1; line-height: 19px; }
.cell {
  width: 15px;
  margin: 2px 0;
  border: 1px solid;
  border-color: var(--shadow) #fff #fff var(--shadow);
}
.ime {
  display: flex;
  align-items: center;
  gap: 1px;
  width: 95px;
  margin-left: -9px;
  padding-left: 4px;
  background: #fff;
  border: 1px solid #8c8890;
}
.ime .bar { width: 1px; height: 12px; margin-right: 1px; background: #404040; }
.ime svg { width: 16px; height: 14px; }

/* Task bar */
.taskbar {
  flex: none;
  height: 27px;
  display: flex;
  align-items: center;
  padding: 0 2px;
  border-top: 1px solid #fff;
  font-size: 12px;
}
.start {
  display: flex;
  align-items: center;
  gap: 1px;
  width: 50px;
  height: 22px;
  padding: 0 2px;
  white-space: nowrap;
}
.start svg { width: 18px; height: 16px; }
.sep {
  width: 7px;
  height: 22px;
  margin-left: 3px;
  border-left: 1px solid var(--shadow);
  box-shadow: inset 1px 0 #fff;
  position: relative;
}
.sep::after {
  content: "";
  position: absolute;
  right: 0;
  top: 1px;
  width: 3px;
  height: 20px;
  border: 1px solid;
  border-color: #fff var(--shadow) var(--shadow) #fff;
}
.quick { display: flex; gap: 7px; padding: 0 6px 0 7px; }
.tasks { flex: 1; display: flex; gap: 3px; padding-left: 3px; min-width: 0; }
.tasks button {
  display: flex;
  align-items: center;
  gap: 1px;
  width: 40px;
  height: 22px;
  padding-left: 3px;
  overflow: hidden;
  white-space: nowrap;
}
.tasks .active {
  border-color: var(--dark) #fff #fff var(--dark);
  box-shadow: inset 1px 1px var(--shadow);
  background: repeating-conic-gradient(#fff 0 25%, var(--face) 0 50%) 0 0 / 2px 2px;
}
.tray {
  display: flex;
  align-items: center;
  gap: 2px;
  height: 22px;
  width: 184px;
  padding: 0 15px 0 3px;
  border: 1px solid;
  border-color: var(--shadow) #fff #fff var(--shadow);
  font-size: 11px;
}
.tray time { margin-left: auto; }
```
